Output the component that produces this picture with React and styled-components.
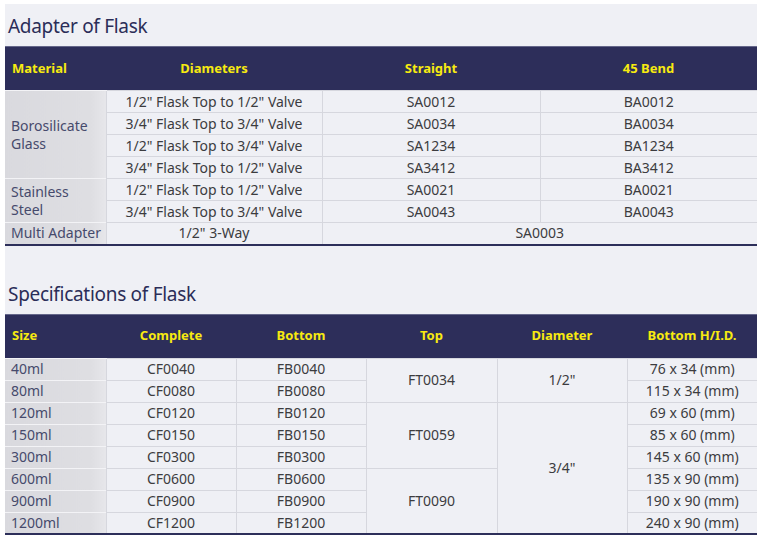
import styled, { createGlobalStyle } from 'styled-components'

const Global = createGlobalStyle`
    body {
        margin: 0;
        background: #ffffff;
        font-family: 'Noto Sans', 'Liberation Sans', sans-serif;
    }
`

const Panel = styled.div`
    margin: 4px 0 0 5px;
    width: 752px;
    background: #eff0f5;
`

const Title = styled.h2`
    margin: 0;
    height: ${props => props.tall}px;
    display: flex;
    align-items: flex-end;
    padding: 0 0 7px 3px;
    box-sizing: border-box;
    font-size: 19px;
    font-weight: 400;
    letter-spacing: -0.3px;
    color: #2b2d58;
`

const Table = styled.table`
    width: 752px;
    table-layout: fixed;
    border-collapse: collapse;
    border-bottom: 2px solid #2d2f5a;
    font-size: 14px;
    color: #3c3c3f;
`

const Head = styled.th`
    height: 41px;
    padding: 0 0 2px ${props => props.left ? '7px' : '0'};
    background: #2d2e5a;
    border-top: 1px solid #65678a;
    color: #f7ea10;
    font-weight: 700;
    font-size: 13px;
    text-align: ${props => props.left ? 'left' : 'center'};
`

const Row = styled.tr`
    height: 22px;
`

const Label = styled.td`
    padding: 0 0 0 6px;
    background: linear-gradient(90deg, #d9d9de 0%, #dedee2 85%, #e6e6ea 100%);
    border-top: 1px solid #f3f3f6;
    color: #464a6c;
    line-height: 18px;
    text-align: left;
`

const Cell = styled.td`
    padding: 0;
    border: 1px solid #d6d7de;
    text-align: center;
    line-height: 20px;
    &:last-child { border-right: none; }
`

const adapters = [
    ['1/2" Flask Top to 1/2" Valve', 'SA0012', 'BA0012'],
    ['3/4" Flask Top to 3/4" Valve', 'SA0034', 'BA0034'],
    ['1/2" Flask Top to 3/4" Valve', 'SA1234', 'BA1234'],
    ['3/4" Flask Top to 1/2" Valve', 'SA3412', 'BA3412'],
    ['1/2" Flask Top to 1/2" Valve', 'SA0021', 'BA0021'],
    ['3/4" Flask Top to 3/4" Valve', 'SA0043', 'BA0043'],
]

const flasks = [
    ['40ml', 'CF0040', 'FB0040', '76 x 34 (mm)'],
    ['80ml', 'CF0080', 'FB0080', '115 x 34 (mm)'],
    ['120ml', 'CF0120', 'FB0120', '69 x 60 (mm)'],
    ['150ml', 'CF0150', 'FB0150', '85 x 60 (mm)'],
    ['300ml', 'CF0300', 'FB0300', '145 x 60 (mm)'],
    ['600ml', 'CF0600', 'FB0600', '135 x 90 (mm)'],
    ['900ml', 'CF0900', 'FB0900', '190 x 90 (mm)'],
    ['1200ml', 'CF1200', 'FB1200', '240 x 90 (mm)'],
]

const tops = { 0: ['FT0034', 2], 2: ['FT0059', 3], 5: ['FT0090', 3] }
const diams = { 0: ['1/2"', 2], 2: ['3/4"', 6] }

const App = () => {
    return <Panel>
        <Global/>
        <Title tall={42}>Adapter of Flask</Title>
        <Table>
            <colgroup>
                <col style={{width: 101}}/><col style={{width: 216}}/><col style={{width: 218}}/><col style={{width: 217}}/>
            </colgroup>
            <thead>
                <tr>
                    <Head left>Material</Head>
                    <Head>Diameters</Head>
                    <Head>Straight</Head>
                    <Head>45 Bend</Head>
                </tr>
            </thead>
            <tbody>
                {adapters.map((a, i) => <Row key={i}>
                    {i === 0 && <Label rowSpan={4}>Borosilicate<br/>Glass</Label>}
                    {i === 4 && <Label rowSpan={2}>Stainless<br/>Steel</Label>}
                    <Cell>{a[0]}</Cell>
                    <Cell>{a[1]}</Cell>
                    <Cell>{a[2]}</Cell>
                </Row>)}
                <Row>
                    <Label>Multi Adapter</Label>
                    <Cell>1/2" 3-Way</Cell>
                    <Cell colSpan={2}>SA0003</Cell>
                </Row>
            </tbody>
        </Table>
        <Title tall={68}>Specifications of Flask</Title>
        <Table>
            <colgroup>
                <col style={{width: 101}}/><col style={{width: 130}}/><col style={{width: 130}}/>
                <col style={{width: 131}}/><col style={{width: 130}}/><col style={{width: 130}}/>
            </colgroup>
            <thead>
                <tr>
                    <Head left>Size</Head>
                    <Head>Complete</Head>
                    <Head>Bottom</Head>
                    <Head>Top</Head>
                    <Head>Diameter</Head>
                    <Head>Bottom H/I.D.</Head>
                </tr>
            </thead>
            <tbody>
                {flasks.map((f, i) => <Row key={i}>
                    <Label>{f[0]}</Label>
                    <Cell>{f[1]}</Cell>
                    <Cell>{f[2]}</Cell>
                    {tops[i] && <Cell rowSpan={tops[i][1]}>{tops[i][0]}</Cell>}
                    {diams[i] && <Cell rowSpan={diams[i][1]}>{diams[i][0]}</Cell>}
                    <Cell>{f[3]}</Cell>
                </Row>)}
            </tbody>
        </Table>
    </Panel>
}

export default App
